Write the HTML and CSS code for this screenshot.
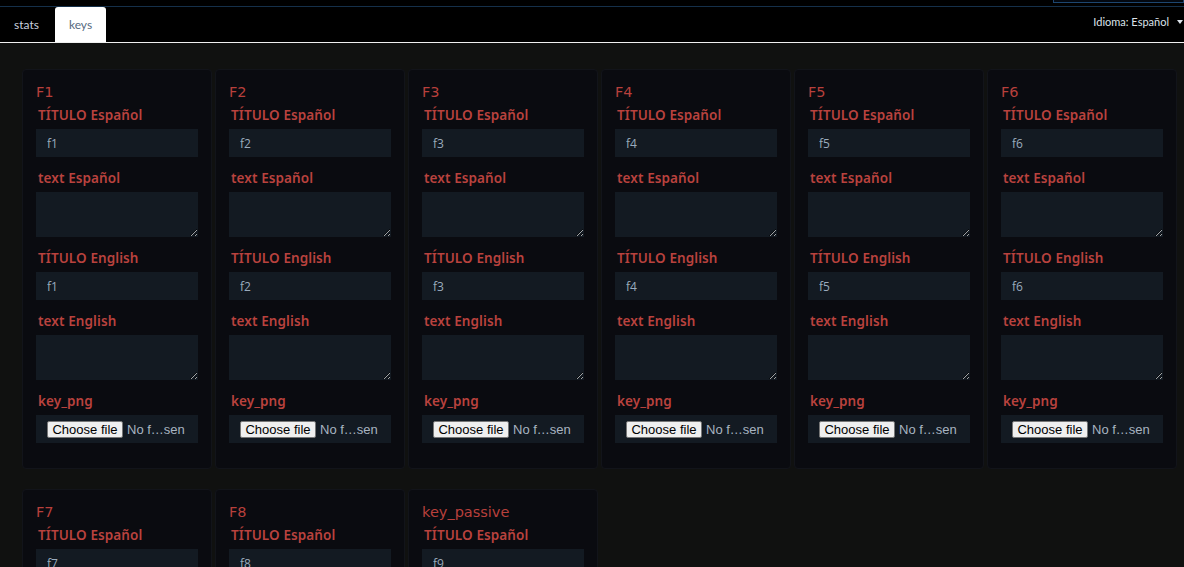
FILE: index.html
```html
<!DOCTYPE html>
<html lang="es">
<head>
    <meta charset="UTF-8">
    <meta name="viewport" content="width=device-width, initial-scale=1.0">
    <link rel="stylesheet" href="styles.css">
    <title>keys</title>
</head>
<body>
    <div class="topstrip">
        <div class="topbox"></div>
    </div>
    <nav class="navbar">
        <ul class="tabs">
            <li class="tab">stats</li>
            <li class="tab active">keys</li>
        </ul>
        <div class="lang">Idioma: Español <span class="caret"></span></div>
    </nav>

    <main class="content">
        <div class="grid" id="grid"></div>
    </main>

    <script>
        const keys = [
            { name: 'F1', value: 'f1' },
            { name: 'F2', value: 'f2' },
            { name: 'F3', value: 'f3' },
            { name: 'F4', value: 'f4' },
            { name: 'F5', value: 'f5' },
            { name: 'F6', value: 'f6' },
            { name: 'F7', value: 'f7' },
            { name: 'F8', value: 'f8' },
            { name: 'key_passive', value: 'f9' }
        ];

        function buildCard(key) {
            return `<div class="card">
                <h3 class="card-title">${key.name}</h3>
                <label class="field-label">TÍTULO Español</label>
                <input type="text" class="field-input" value="${key.value}">
                <label class="field-label">text Español</label>
                <textarea class="field-area"></textarea>
                <label class="field-label">TÍTULO English</label>
                <input type="text" class="field-input" value="${key.value}">
                <label class="field-label">text English</label>
                <textarea class="field-area"></textarea>
                <label class="field-label">key_png</label>
                <div class="file-box">
                    <label class="file-btn">Choose file<input type="file" class="file-input"></label>
                    <span class="file-name">No f…sen</span>
                </div>
            </div>`;
        }

        document.getElementById('grid').innerHTML = keys.map(buildCard).join('');
    </script>
</body>
</html>
```

FILE: styles.css
```css
* {
    margin: 0;
    padding: 0;
    box-sizing: border-box;
}

body {
    background-color: #101110;
    font-family: "Open Sans", Arial, sans-serif;
}

.topstrip {
    height: 7px;
    background-color: #000;
    border-bottom: 1px solid #15304a;
    display: flex;
    justify-content: flex-end;
    overflow: hidden;
}

.topbox {
    width: 131px;
    height: 3px;
    background-color: #030810;
    border: 1px solid #1d4670;
    border-top: none;
}

.navbar {
    background-color: #000;
    height: 36px;
    border-bottom: 1px solid #f0f0f0;
    display: flex;
    justify-content: space-between;
    align-items: flex-start;
    font-family: "Lato", "Open Sans", sans-serif;
}

.tabs {
    list-style: none;
    display: flex;
}

.tab {
    font-size: 12px;
    color: #c9d1de;
    height: 35px;
    line-height: 36px;
    padding: 0 14px;
    margin-right: 2px;
}

.tab.active {
    background-color: #fff;
    color: #566a80;
    border-radius: 3px 3px 0 0;
}

.lang {
    font-size: 11px;
    color: #dde3ea;
    line-height: 30px;
    padding-right: 1px;
    display: flex;
    align-items: center;
}

.caret {
    display: inline-block;
    margin-left: 8px;
    border-left: 3px solid transparent;
    border-right: 3px solid transparent;
    border-top: 4px solid #dde3ea;
}

.content {
    padding: 26px 8px 20px 22px;
}

.grid {
    display: grid;
    grid-template-columns: repeat(6, 1fr);
    column-gap: 3px;
    row-gap: 20px;
}

.card {
    background-color: #0a0b10;
    border: 1px solid #12141a;
    border-radius: 4px;
    padding: 13px 13px 25px 13px;
    display: flex;
    flex-direction: column;
}

.card-title {
    font-family: "DejaVu Sans", Verdana, sans-serif;
    font-weight: normal;
    font-size: 14.5px;
    line-height: 18px;
    color: #b8403c;
    margin-bottom: 5px;
}

.field-label {
    font-family: "Noto Sans", "Open Sans", sans-serif;
    font-weight: 600;
    font-size: 13.5px;
    letter-spacing: 0.1px;
    line-height: 19px;
    color: #b9423e;
    padding-left: 2px;
    margin-bottom: 4px;
}

.field-input,
.field-area,
.file-box {
    width: 162px;
    background-color: #131a22;
    border: none;
    color: #9aabbd;
    font-family: "Open Sans", Arial, sans-serif;
    font-size: 12px;
    margin-bottom: 12px;
}

.field-input {
    height: 28px;
    padding: 0 11px;
}

.field-area {
    height: 45px;
    resize: vertical;
}

.file-box {
    height: 28px;
    padding: 0 11px;
    margin-bottom: 0;
    display: flex;
    align-items: center;
    font-family: Arial, "Liberation Sans", sans-serif;
    font-size: 13px;
    color: #a8b4c0;
}

.file-btn {
    height: 17px;
    width: 76px;
    background-color: #efefef;
    border: 1px solid #767676;
    border-radius: 2px;
    color: #000;
    line-height: 15px;
    text-align: center;
    margin-right: 4px;
    white-space: nowrap;
}

.file-input {
    display: none;
}

.file-name {
    white-space: nowrap;
}
```
